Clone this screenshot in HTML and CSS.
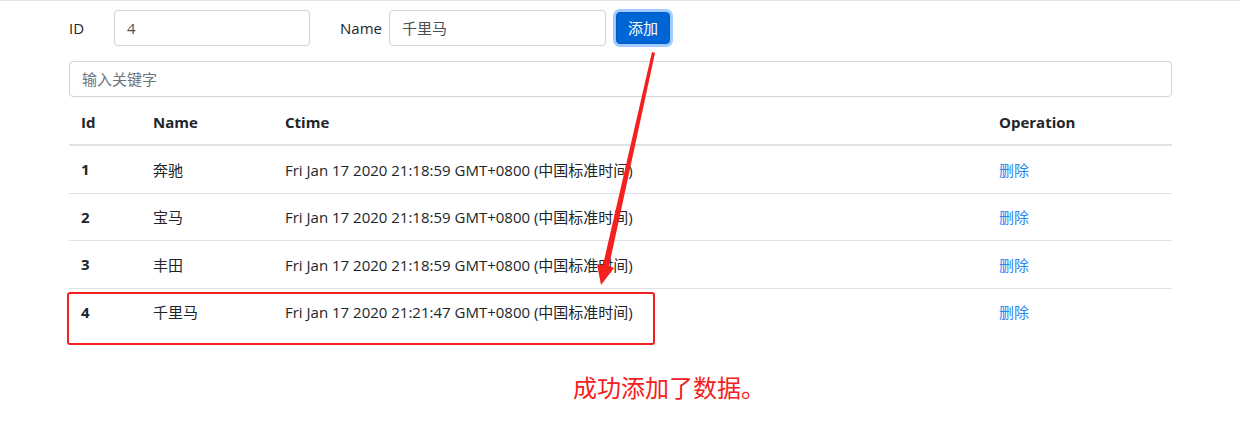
FILE: index.html
```html
<!DOCTYPE html>
<html lang="zh">
<head>
<meta charset="utf-8">
<link rel="stylesheet" href="styles.css">
</head>
<body>
<div class="topline"></div>
<div class="page">
  <div class="form-row">
    <label class="lbl lbl-id">ID</label>
    <input class="ctrl ctrl-id" type="text" value="4">
    <label class="lbl lbl-name">Name</label>
    <input class="ctrl ctrl-name" type="text" value="千里马">
    <button class="btn">添加</button>
  </div>
  <input class="ctrl search" type="text" placeholder="输入关键字">
  <table class="tbl">
    <thead>
      <tr><th class="c-id">Id</th><th class="c-name">Name</th><th class="c-time">Ctime</th><th class="c-op">Operation</th></tr>
    </thead>
    <tbody>
      <tr><td class="b">1</td><td>奔驰</td><td>Fri Jan 17 2020 21:18:59 GMT+0800 (中国标准时间)</td><td><a href="#">删除</a></td></tr>
      <tr><td class="b">2</td><td>宝马</td><td>Fri Jan 17 2020 21:18:59 GMT+0800 (中国标准时间)</td><td><a href="#">删除</a></td></tr>
      <tr><td class="b">3</td><td>丰田</td><td>Fri Jan 17 2020 21:18:59 GMT+0800 (中国标准时间)</td><td><a href="#">删除</a></td></tr>
      <tr><td class="b">4</td><td>千里马</td><td>Fri Jan 17 2020 21:21:47 GMT+0800 (中国标准时间)</td><td><a href="#">删除</a></td></tr>
    </tbody>
  </table>
  <p class="note">成功添加了数据。</p>
</div>
<div class="hl-box"></div>
<svg class="arrow" width="1240" height="436" viewBox="0 0 1240 436">
  <polygon points="652,52 655,53 609,266 614,268 601,285 597,264 603,265" fill="#f42020"/>
</svg>
</body>
</html>
```
FILE: styles.css
```css
html, body { margin: 0; padding: 0; background: #fff; }
body {
  font-family: "Open Sans", "Noto Sans CJK SC", sans-serif;
  font-size: 15px;
  color: #212529;
  width: 1240px;
  height: 436px;
  overflow: hidden;
  position: relative;
}
.topline { height: 1px; background: #e3e3e3; }
.page { padding-left: 69px; width: 1103px; }
.form-row {
  display: flex;
  align-items: center;
  margin-top: 8px;
  height: 37px;
}
.lbl { font-size: 15px; }
.lbl-id { width: 45px; }
.lbl-name { margin-left: 30px; width: 49px; }
.ctrl {
  box-sizing: border-box;
  height: 36px;
  border: 1px solid #ced4da;
  border-radius: 4px;
  padding: 0 12px;
  font-family: "Open Sans", "Noto Sans CJK SC", sans-serif;
  font-size: 15px;
  color: #495057;
  background: #fff;
  outline: none;
}
.ctrl-id { width: 196px; }
.ctrl-name { width: 217px; }
.btn {
  box-sizing: border-box;
  margin-left: 10px;
  width: 54px;
  height: 32px;
  border: 1px solid #005cbf;
  border-radius: 4px;
  background: #0066d6;
  color: #fff;
  font-family: "Open Sans", "Noto Sans CJK SC", sans-serif;
  font-size: 15px;
  box-shadow: 0 0 0 3px rgba(80, 160, 255, .55);
  padding: 0;
}
.search {
  display: block;
  width: 1103px;
  margin-top: 15px;
}
.search::placeholder { color: #6c757d; }
.tbl {
  width: 1103px;
  border-collapse: collapse;
  margin-top: 2px;
}
.tbl th, .tbl td {
  text-align: left;
  padding: 0 12px;
  vertical-align: middle;
}
.tbl th { font-weight: 700; height: 45px; border-bottom: 2px solid #dee2e6; }
.tbl td { height: 46.5px; border-top: 1px solid #dee2e6; }
.tbl tbody tr:first-child td { border-top: 0; }
.c-id { width: 48px; }
.c-name { width: 108px; }
.c-time { width: 690px; }
.tbl td.b { font-weight: 700; }
.tbl a { color: #2b86f0; text-decoration: none; }
.note {
  margin: 34px 0 0 504px;
  color: #f42020;
  font-size: 24px;
}
.hl-box {
  position: absolute;
  left: 67px;
  top: 292px;
  width: 584px;
  height: 49px;
  border: 2px solid #f42020;
  border-radius: 3px;
}
.arrow { position: absolute; left: 0; top: 0; pointer-events: none; }
```
